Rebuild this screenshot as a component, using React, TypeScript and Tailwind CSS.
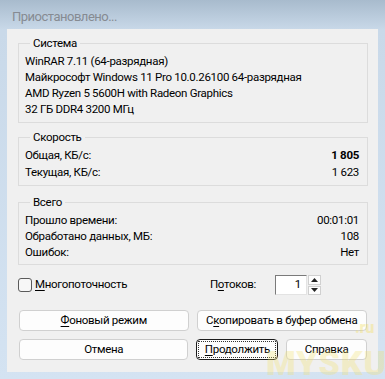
export default function App() {
  const font = { fontFamily: 'Roboto, "Noto Sans", sans-serif' };
  return (
    <div
      className="relative w-[385px] h-[379px] overflow-hidden bg-gradient-to-b from-[#a8bbcd] via-[#c9d9e9] via-[30px] to-[#d4e3f2] text-[11.5px] tracking-[-0.3px] text-black"
      style={font}
    >
      <div className="h-[29px] flex items-center pl-[12px] pt-[4px] text-[13px] tracking-[-0.5px] text-[#868b92]">
        Приостановлено...
      </div>

      <div className="mx-[7px] h-[343px] bg-[#f0f0f0] pl-[11px] pr-[10px] pt-[6px] flex flex-col">
        <fieldset className="border border-[#dcdcdc] pl-[6px] pr-[8px] pb-[5px]">
          <legend className="ml-[5px] px-[3px] leading-[16px]">Система</legend>
          <div className="leading-[16px] pt-[2px]">
            <div>WinRAR 7.11 (64-разрядная)</div>
            <div>Майкрософт Windows 11 Pro 10.0.26100 64-разрядная</div>
            <div>AMD Ryzen 5 5600H with Radeon Graphics</div>
            <div>32 ГБ DDR4 3200 МГц</div>
          </div>
        </fieldset>

        <fieldset className="mt-[6px] border border-[#dcdcdc] pl-[6px] pr-[8px] pb-[4px]">
          <legend className="ml-[5px] px-[3px] leading-[16px]">Скорость</legend>
          <div className="leading-[17px] pt-[2px]">
            <div className="flex justify-between">
              <span>Общая, КБ/с:</span>
              <span className="font-bold">1 805</span>
            </div>
            <div className="flex justify-between">
              <span>Текущая, КБ/с:</span>
              <span>1 623</span>
            </div>
          </div>
        </fieldset>

        <fieldset className="mt-[8px] border border-[#dcdcdc] pl-[6px] pr-[8px] pb-[4px]">
          <legend className="ml-[5px] px-[3px] leading-[16px]">Всего</legend>
          <div className="leading-[16px] pt-[2px]">
            <div className="flex justify-between">
              <span>Прошло времени:</span>
              <span>00:01:01</span>
            </div>
            <div className="flex justify-between">
              <span>Обработано данных, МБ:</span>
              <span>108</span>
            </div>
            <div className="flex justify-between">
              <span>Ошибок:</span>
              <span>Нет</span>
            </div>
          </div>
        </fieldset>

        <div className="mt-[10px] h-[20px] flex items-center">
          <div className="w-[14px] h-[14px] rounded-[3px] border border-[#5a5a5a] bg-[#f7f7f7]" />
          <span className="ml-[3px]">
            <span className="underline underline-offset-2">М</span>ногопоточность
          </span>
          <span className="ml-auto">
            П<span className="underline underline-offset-2">о</span>токов:
          </span>
          <div className="ml-[19px] w-[32px] h-[20px] bg-white border-t border-l border-t-[#7a7a7a] border-l-[#7a7a7a] border-r border-b border-r-[#e3e3e3] border-b-[#e3e3e3] flex items-center justify-end pr-[5px]">
            1
          </div>
          <div className="ml-[1px] mr-[47px] w-[13px] h-[20px] flex flex-col gap-[1px]">
            <div className="flex-1 bg-[#fdfdfd] border border-[#d0d0d0] flex items-center justify-center">
              <svg width="7" height="4" viewBox="0 0 7 4">
                <path d="M0 4 L3.5 0 L7 4 Z" fill="#222" />
              </svg>
            </div>
            <div className="flex-1 bg-[#fdfdfd] border border-[#d0d0d0] flex items-center justify-center">
              <svg width="7" height="4" viewBox="0 0 7 4">
                <path d="M0 0 L3.5 4 L7 0 Z" fill="#222" />
              </svg>
            </div>
          </div>
        </div>

        <div className="mt-[15px] flex gap-[8px] pl-[1px] pr-[1px] whitespace-nowrap">
          <button className="w-[170px] h-[21px] rounded-[4px] bg-[#fdfdfd] border border-[#d0d0d0]">
            <span className="underline underline-offset-2">Ф</span>оновый режим
          </button>
          <button className="w-[171px] h-[21px] rounded-[4px] bg-[#fdfdfd] border border-[#d0d0d0]">
            С<span className="underline underline-offset-2">к</span>опировать в буфер обмена
          </button>
        </div>

        <div className="mt-[8px] flex pl-[1px] pr-[1px] whitespace-nowrap">
          <button className="w-[170px] h-[21px] rounded-[4px] bg-[#fdfdfd] border border-[#d0d0d0]">
            Отмена
          </button>
          <button className="ml-[8px] w-[82px] h-[21px] rounded-[4px] bg-[#fdfdfd] border border-[#1c1c1c] p-[1px]">
            <div className="h-full border border-dotted border-[#333] flex items-center justify-center">
              <span className="underline underline-offset-2">П</span>родолжить
            </div>
          </button>
          <button className="ml-[8px] w-[81px] h-[21px] rounded-[4px] bg-[#fdfdfd] border border-[#d0d0d0]">
            Справка
          </button>
        </div>
      </div>

      <div className="absolute left-[266px] top-[346px] text-[34px] leading-none font-black tracking-[1px] text-[#f3e06a] opacity-30 pointer-events-none">
        MYSKU
      </div>
      <div className="absolute left-[355px] top-[320px] text-[16px] leading-none font-black text-[#f3e06a] opacity-40 pointer-events-none">
        .ru
      </div>
    </div>
  );
}
